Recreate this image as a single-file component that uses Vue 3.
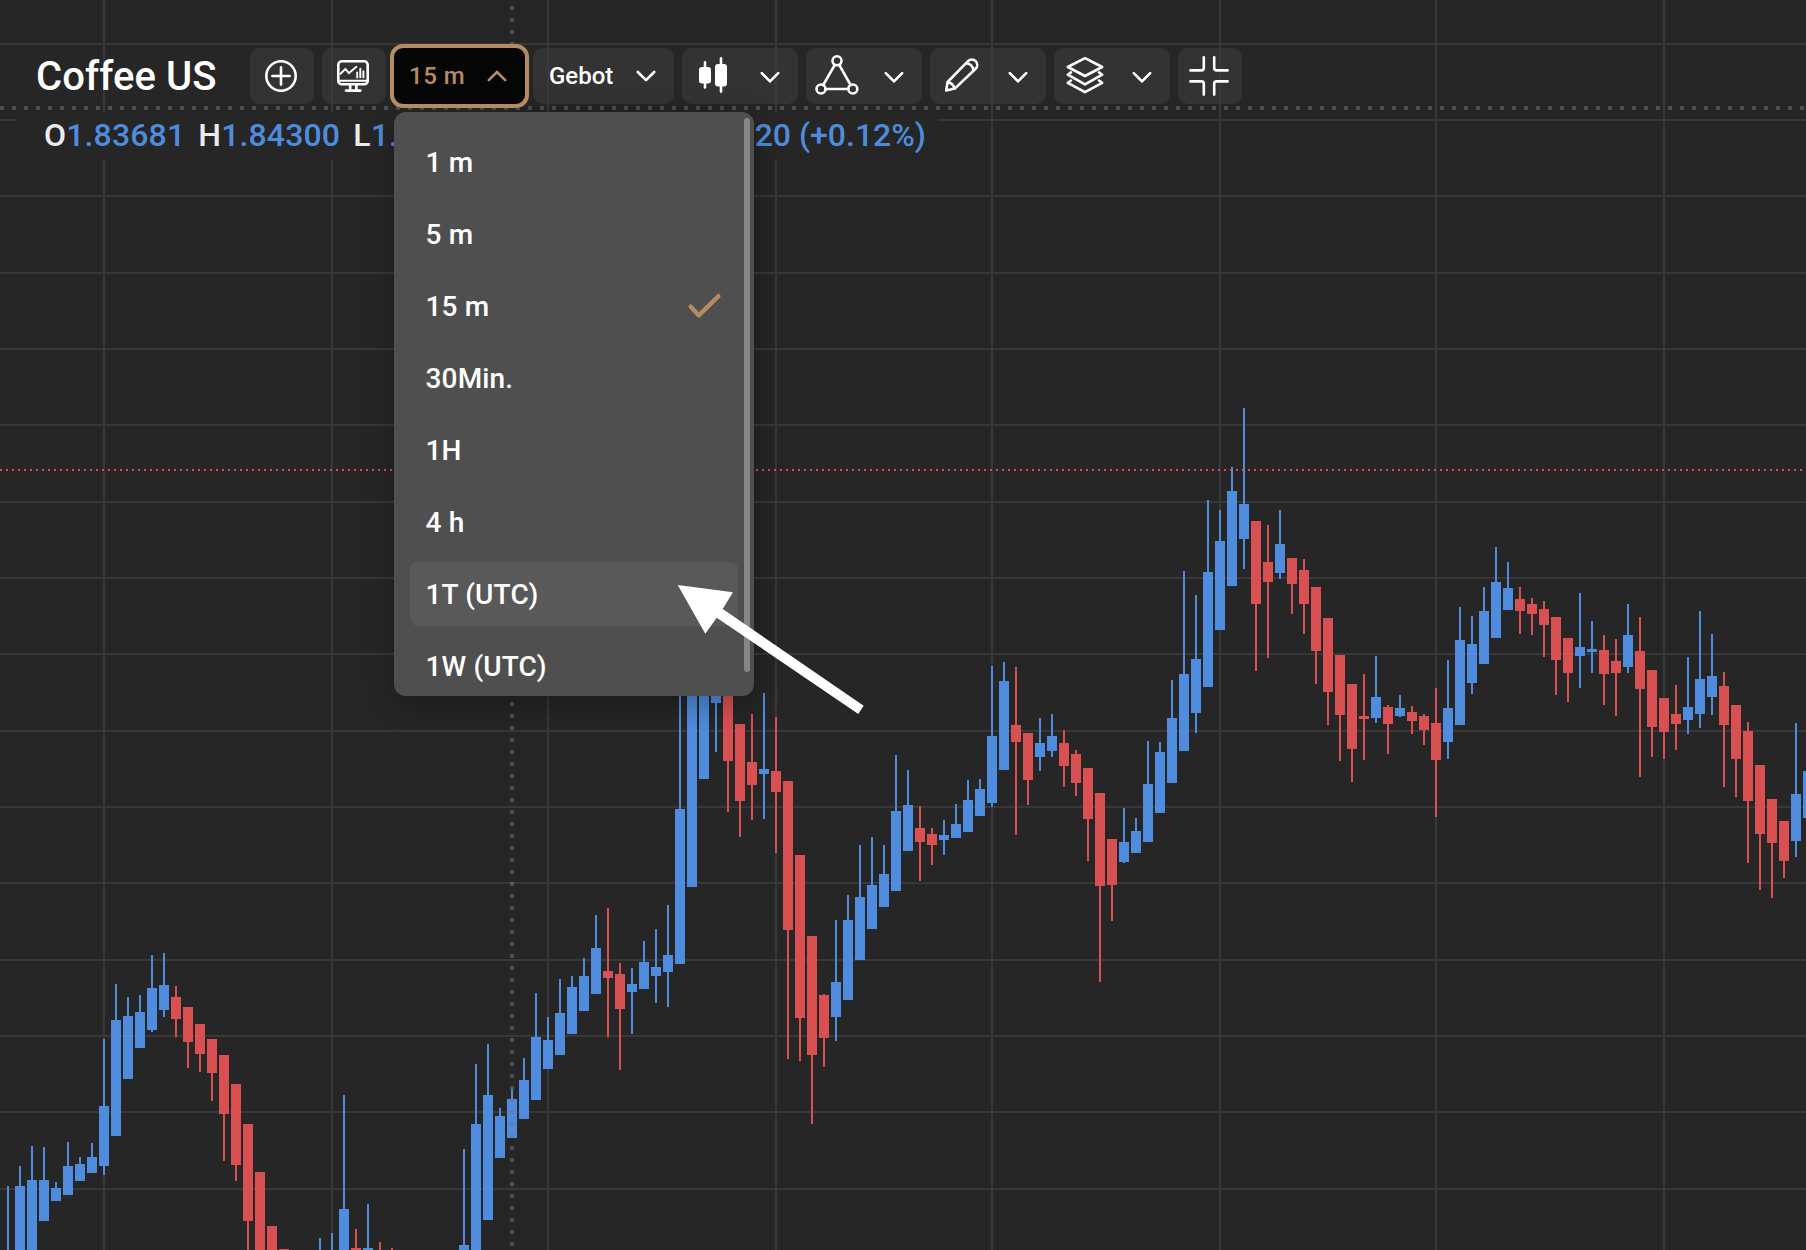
<script setup>
import { computed, ref } from 'vue';

const WIDTH = 1806;
const HEIGHT = 1250;
const STEP = 12;
const FIRST_X = 8;

const menuOpen = ref(true);
const selected = ref('15 m');
const hovered = ref('1T (UTC)');

const timeframes = ['1 m', '5 m', '15 m', '30Min.', '1H', '4 h', '1T (UTC)', '1W (UTC)'];

const gridX = [104, 332, 548, 776, 992, 1220, 1436, 1664];
const gridY = [44, 120, 196, 273, 349, 425, 502, 578, 654, 731, 807, 883, 960, 1036, 1112, 1189];

// [slot, direction, high, body top, body bottom, low]
const series = [
  [0, 'u', 1186, 1260, 1270, 1270],
  [1, 'u', 1166, 1186, 1260, 1260],
  [2, 'u', 1146, 1180, 1260, 1260],
  [3, 'u', 1147, 1180, 1221, 1221],
  [4, 'u', 1182, 1188, 1201, 1201],
  [5, 'u', 1142, 1166, 1195, 1195],
  [6, 'u', 1157, 1164, 1181, 1181],
  [7, 'u', 1143, 1157, 1173, 1173],
  [8, 'u', 1039, 1106, 1166, 1175],
  [9, 'u', 984, 1020, 1136, 1136],
  [10, 'u', 997, 1016, 1079, 1079],
  [11, 'u', 995, 1012, 1048, 1048],
  [12, 'u', 955, 988, 1030, 1032],
  [13, 'u', 953, 985, 1010, 1017],
  [14, 'd', 986, 997, 1019, 1037],
  [15, 'd', 1007, 1007, 1042, 1068],
  [16, 'd', 1024, 1024, 1054, 1072],
  [17, 'd', 1039, 1039, 1073, 1101],
  [18, 'd', 1055, 1055, 1114, 1161],
  [19, 'd', 1084, 1084, 1165, 1181],
  [20, 'd', 1124, 1124, 1221, 1260],
  [21, 'd', 1172, 1172, 1260, 1260],
  [22, 'd', 1226, 1226, 1260, 1260],
  [23, 'd', 1249, 1249, 1260, 1260],
  [26, 'u', 1238, 1260, 1270, 1270],
  [27, 'u', 1233, 1260, 1270, 1270],
  [28, 'u', 1095, 1209, 1260, 1260],
  [29, 'd', 1229, 1248, 1260, 1260],
  [30, 'u', 1204, 1248, 1260, 1260],
  [31, 'd', 1242, 1260, 1270, 1270],
  [32, 'd', 1248, 1260, 1270, 1270],
  [38, 'u', 1149, 1245, 1260, 1260],
  [39, 'u', 1064, 1124, 1260, 1260],
  [40, 'u', 1044, 1095, 1220, 1220],
  [41, 'u', 1108, 1116, 1158, 1158],
  [42, 'u', 1089, 1099, 1138, 1138],
  [43, 'u', 1058, 1080, 1119, 1119],
  [44, 'u', 993, 1037, 1100, 1100],
  [45, 'u', 1017, 1040, 1069, 1069],
  [46, 'u', 979, 1013, 1055, 1055],
  [47, 'u', 976, 987, 1034, 1034],
  [48, 'u', 958, 976, 1011, 1011],
  [49, 'u', 915, 948, 994, 994],
  [50, 'd', 908, 971, 978, 1037],
  [51, 'd', 963, 974, 1009, 1070],
  [52, 'u', 968, 984, 992, 1034],
  [53, 'u', 941, 962, 989, 989],
  [54, 'u', 929, 967, 976, 1003],
  [55, 'u', 905, 955, 972, 1007],
  [56, 'u', 640, 809, 964, 964],
  [57, 'u', 620, 660, 887, 887],
  [58, 'u', 610, 640, 779, 779],
  [59, 'u', 600, 640, 703, 752],
  [60, 'd', 600, 660, 761, 812],
  [61, 'd', 724, 724, 801, 837],
  [62, 'd', 714, 762, 785, 820],
  [63, 'u', 693, 769, 774, 819],
  [64, 'd', 717, 771, 792, 853],
  [65, 'd', 781, 781, 930, 1059],
  [66, 'd', 855, 855, 1018, 1061],
  [67, 'd', 936, 936, 1055, 1124],
  [68, 'd', 994, 995, 1038, 1067],
  [69, 'u', 920, 982, 1017, 1041],
  [70, 'u', 895, 920, 1000, 1000],
  [71, 'u', 845, 897, 960, 960],
  [72, 'u', 837, 885, 929, 929],
  [73, 'u', 845, 874, 907, 907],
  [74, 'u', 755, 811, 891, 891],
  [75, 'u', 770, 805, 851, 851],
  [76, 'd', 806, 828, 842, 881],
  [77, 'd', 828, 834, 845, 865],
  [78, 'u', 820, 835, 840, 855],
  [79, 'u', 804, 824, 838, 838],
  [80, 'u', 780, 800, 832, 832],
  [81, 'u', 779, 789, 816, 816],
  [82, 'u', 666, 736, 803, 807],
  [83, 'u', 662, 681, 770, 770],
  [84, 'd', 667, 725, 742, 835],
  [85, 'd', 733, 733, 780, 805],
  [86, 'u', 718, 743, 757, 771],
  [87, 'u', 714, 736, 751, 757],
  [88, 'd', 730, 743, 766, 787],
  [89, 'd', 750, 754, 783, 796],
  [90, 'd', 768, 768, 819, 861],
  [91, 'd', 793, 793, 886, 982],
  [92, 'd', 839, 839, 885, 921],
  [93, 'u', 808, 842, 862, 863],
  [94, 'u', 818, 831, 853, 853],
  [95, 'u', 741, 784, 842, 842],
  [96, 'u', 742, 752, 813, 813],
  [97, 'u', 680, 718, 783, 783],
  [98, 'u', 571, 674, 751, 751],
  [99, 'u', 595, 659, 713, 733],
  [100, 'u', 500, 572, 687, 687],
  [101, 'u', 510, 541, 630, 630],
  [102, 'u', 467, 491, 586, 586],
  [103, 'u', 408, 504, 539, 569],
  [104, 'd', 521, 521, 604, 671],
  [105, 'd', 525, 562, 582, 658],
  [106, 'u', 510, 544, 573, 579],
  [107, 'd', 558, 558, 584, 614],
  [108, 'd', 559, 570, 604, 634],
  [109, 'd', 587, 587, 651, 684],
  [110, 'd', 618, 618, 692, 725],
  [111, 'd', 655, 655, 715, 761],
  [112, 'd', 684, 684, 749, 782],
  [113, 'd', 674, 716, 719, 760],
  [114, 'u', 656, 697, 718, 723],
  [115, 'd', 705, 707, 724, 754],
  [116, 'u', 695, 708, 716, 717],
  [117, 'd', 706, 712, 721, 734],
  [118, 'd', 714, 716, 730, 745],
  [119, 'd', 688, 723, 760, 817],
  [120, 'u', 660, 708, 742, 759],
  [121, 'u', 607, 640, 725, 725],
  [122, 'u', 616, 644, 683, 694],
  [123, 'u', 587, 611, 664, 664],
  [124, 'u', 547, 582, 638, 638],
  [125, 'u', 562, 588, 610, 610],
  [126, 'd', 587, 599, 611, 634],
  [127, 'd', 598, 604, 614, 635],
  [128, 'd', 601, 609, 625, 657],
  [129, 'd', 617, 617, 660, 695],
  [130, 'd', 638, 638, 673, 702],
  [131, 'u', 593, 647, 656, 688],
  [132, 'u', 621, 649, 652, 673],
  [133, 'd', 635, 650, 674, 705],
  [134, 'd', 639, 661, 673, 716],
  [135, 'u', 604, 635, 667, 673],
  [136, 'd', 617, 651, 689, 777],
  [137, 'd', 670, 670, 727, 757],
  [138, 'd', 698, 698, 732, 759],
  [139, 'd', 685, 714, 724, 750],
  [140, 'u', 657, 707, 720, 734],
  [141, 'u', 611, 679, 714, 728],
  [142, 'u', 634, 676, 697, 715],
  [143, 'd', 672, 686, 725, 787],
  [144, 'd', 705, 705, 759, 797],
  [145, 'd', 722, 731, 801, 863],
  [146, 'd', 765, 765, 834, 890],
  [147, 'd', 799, 799, 843, 898],
  [148, 'd', 821, 821, 861, 878],
  [149, 'u', 723, 794, 841, 857],
  [150, 'u', 771, 771, 818, 818]
];

const candles = computed(() =>
  series.map(([slot, dir, high, top, bottom, low]) => ({
    slot,
    dir,
    x: FIRST_X + slot * STEP,
    high,
    top,
    bottom,
    low
  }))
);

const pick = (value) => {
  selected.value = value;
  menuOpen.value = false;
};
</script>

<template>
  <div class="terminal">
    <svg class="chart" :width="WIDTH" :height="HEIGHT" :viewBox="`0 0 ${WIDTH} ${HEIGHT}`" shape-rendering="crispEdges">
      <g class="chart__grid">
        <rect v-for="x in gridX" :key="`x${x}`" :x="x - 1" y="0" width="2" :height="HEIGHT" />
        <rect v-for="y in gridY" :key="`y${y}`" x="0" :y="y - 1" :width="WIDTH" height="2" />
      </g>
      <g v-for="c in candles" :key="c.slot" :class="c.dir === 'u' ? 'candle--up' : 'candle--down'">
        <rect :x="c.x - 1" :y="c.high" width="2" :height="c.low - c.high" />
        <rect :x="c.x - 5" :y="c.top" width="10" :height="c.bottom - c.top" />
      </g>
      <line class="chart__price" x1="0" y1="470" :x2="WIDTH" y2="470" />
      <line class="chart__cross" x1="512" y1="-6" x2="512" :y2="HEIGHT" />
      <line class="chart__cross" x1="0" y1="108" :x2="WIDTH" y2="108" />
    </svg>

    <header class="toolbar">
      <h1 class="toolbar__title">Coffee US</h1>

      <button class="tool">
        <svg class="icon" width="64" height="56" viewBox="0 0 64 56">
          <circle cx="31" cy="28" r="14.7" />
          <path d="M31 19.4v17.2M22.4 28h17.2" />
        </svg>
      </button>

      <button class="tool">
        <svg class="icon" width="64" height="56" viewBox="0 0 64 56">
          <rect x="16.3" y="13.3" width="29.4" height="23" rx="3.6" />
          <path class="icon__thin" d="M17 32.8h28" />
          <path class="icon__thin" d="M18.4 25.8l5-5 3.4 4.4 7.6-6.4" />
          <path class="icon__thin" d="M35.2 24.4v5M38.3 20.8v8.6M41.4 23.2v6.2" />
          <path d="M28.2 37.4v4M34.4 37.4v4" />
          <path d="M24 42.6h14.4" />
        </svg>
      </button>

      <div class="dropdown">
        <button class="tool tool--active" @click="menuOpen = !menuOpen">
          <span class="tool__label">{{ selected }}</span>
          <svg class="icon" width="20" height="14" viewBox="0 0 20 14">
            <path d="M1.8 11.2L10 3l8.2 8.2" />
          </svg>
        </button>

        <div v-if="menuOpen" class="menu">
          <ul class="menu__list">
            <li
              v-for="item in timeframes"
              :key="item"
              class="menu__item"
              :class="{ 'menu__item--hover': item === hovered }"
              @mouseenter="hovered = item"
              @click="pick(item)"
            >
              <span>{{ item }}</span>
              <svg v-if="item === selected" class="menu__check" width="36" height="28" viewBox="0 0 36 28">
                <path d="M4.6 14.6L12.8 23.4 32.4 4.2" />
              </svg>
            </li>
          </ul>
          <div class="menu__thumb"></div>
        </div>
      </div>

      <button class="tool tool--text">
        <span class="tool__label">Gebot</span>
        <svg class="icon" width="20" height="14" viewBox="0 0 20 14">
          <path d="M1.8 3L10 11.2 18.2 3" />
        </svg>
      </button>

      <button class="tool">
        <svg class="icon" width="116" height="56" viewBox="0 0 116 56">
          <path d="M23 14.4v25M39 10.4v33.2" />
          <rect class="icon__solid" x="17" y="19" width="12" height="16.4" rx="3" />
          <rect class="icon__solid" x="33" y="16" width="12" height="22.4" rx="3" />
          <path d="M79.8 25.2L88 33.4 96.2 25.2" />
        </svg>
      </button>

      <button class="tool">
        <svg class="icon" width="116" height="56" viewBox="0 0 116 56">
          <circle cx="31" cy="12.8" r="4.5" />
          <circle cx="15" cy="41" r="4.5" />
          <circle cx="46.8" cy="41" r="4.5" />
          <path d="M28.8 16.8L17.2 37M33.2 16.8L44.6 37M19.6 41h22.6" />
          <path d="M79.8 25.2L88 33.4 96.2 25.2" />
        </svg>
      </button>

      <button class="tool">
        <svg class="icon" width="116" height="56" viewBox="0 0 116 56">
          <path d="M16.2 42.4l1.4-8.4L38 13.2a5.3 5.3 0 0 1 7.6 7.6L24.8 40.6z" />
          <path d="M36.4 15.2c4 .4 6.4 3 7 7M18 34.4c3.6.6 5.6 2.6 6.4 6" />
          <path d="M79.8 25.2L88 33.4 96.2 25.2" />
        </svg>
      </button>

      <button class="tool">
        <svg class="icon" width="116" height="56" viewBox="0 0 116 56">
          <path d="M31 10.2L48.2 19 31 28 13.8 19z" />
          <path d="M17 24.4l-3.2 2.3L31 36.4l17.2-9.7-3.2-2.3" />
          <path d="M17 32.5l-3.2 2.3L31 44.2l17.2-9.4-3.2-2.3" />
          <path d="M79.8 25.2L88 33.4 96.2 25.2" />
        </svg>
      </button>

      <button class="tool">
        <svg class="icon" width="64" height="56" viewBox="0 0 64 56">
          <path d="M12.4 22.4h11q2.4 0 2.4-2.4V9.2" />
          <path d="M49.6 22.4h-11q-2.4 0-2.4-2.4V9.2" />
          <path d="M12.4 33.4h11q2.4 0 2.4 2.4v10.8" />
          <path d="M49.6 33.4h-11q-2.4 0-2.4 2.4v10.8" />
        </svg>
      </button>
    </header>

    <div class="legend">
      <span class="legend__cell">O<b>1.83681</b></span>
      <span class="legend__cell">H<b>1.84300</b></span>
      <span class="legend__cell">L<b>1.83520</b></span>
      <span class="legend__change">+0.00220 (+0.12%)</span>
    </div>

    <svg class="pointer" width="190" height="134" viewBox="676 583 190 134">
      <path d="M677.7 585l55.3 7.3-10.3 16.7 141 96.7-5.4 8.3-141.6-96.3-11.4 16z" />
    </svg>
  </div>
</template>

<style>
body {
  margin: 0;
  background: #262626;
}
</style>

<style scoped>
.terminal {
  position: relative;
  width: 1806px;
  height: 1250px;
  overflow: hidden;
  background: #262626;
  color: #fff;
  font-family: Roboto, 'Liberation Sans', sans-serif;
}

.chart {
  position: absolute;
  inset: 0;
  display: block;
}

.chart__grid {
  fill: #383838;
}

.candle--up {
  fill: #4f8cdd;
}

.candle--down {
  fill: #d95053;
}

.chart__price {
  stroke: #d95053;
  stroke-width: 2;
  stroke-dasharray: 2 4;
}

.chart__cross {
  stroke: rgba(112, 117, 133, 0.5);
  stroke-width: 4;
  stroke-dasharray: 4 8;
}

.toolbar {
  position: relative;
  z-index: 2;
  display: flex;
  gap: 8px;
  height: 56px;
  padding: 48px 0 0 36px;
}

.toolbar__title {
  width: 206px;
  margin: 0;
  font-size: 40px;
  font-weight: 500;
  letter-spacing: 0.1px;
  line-height: 58px;
  white-space: nowrap;
}

.tool {
  display: flex;
  align-items: center;
  flex: none;
  height: 56px;
  padding: 0;
  border: 0;
  border-radius: 10px;
  background: rgba(61, 61, 61, 0.58);
  color: #fff;
  font-family: inherit;
  cursor: pointer;
}

.tool__label {
  font-size: 24px;
  font-weight: 500;
  line-height: 56px;
  white-space: nowrap;
}

.tool--text {
  justify-content: space-between;
  width: 141px;
  padding: 0 18px 0 16px;
}

.tool--active {
  justify-content: space-between;
  box-sizing: border-box;
  width: 139px;
  height: 64px;
  margin: -4px;
  padding: 0 18px 0 15px;
  border: 4px solid #b58b63;
  border-radius: 13px;
  background: rgba(4, 4, 4, 0.94);
  color: #b58b63;
}

.tool--active .tool__label {
  letter-spacing: 0.5px;
}

.icon {
  display: block;
  fill: none;
  stroke: currentColor;
  stroke-width: 2.6;
  stroke-linecap: round;
  stroke-linejoin: round;
}

.icon__thin {
  stroke-width: 1.9;
}

.icon__solid {
  fill: currentColor;
  stroke: none;
}

.dropdown {
  position: relative;
  width: 131px;
}

.menu {
  position: absolute;
  top: 64px;
  left: 0;
  box-sizing: border-box;
  width: 360px;
  height: 584px;
  padding: 18px 16px 0;
  overflow: hidden;
  border-radius: 12px;
  background: #4f4f4f;
}

.dropdown::after {
  content: '';
  position: absolute;
  z-index: -1;
  top: 64px;
  left: 0;
  width: 360px;
  height: 584px;
  border-radius: 12px;
  box-shadow: 0 8px 32px rgba(0, 0, 0, 0.3);
}

.menu__list {
  display: flex;
  flex-direction: column;
  gap: 8px;
  margin: 0;
  padding: 0;
  list-style: none;
}

.menu__item {
  display: flex;
  align-items: center;
  justify-content: space-between;
  height: 64px;
  padding: 0 16px 0 15.5px;
  border-radius: 8px;
  font-size: 28px;
  font-weight: 500;
  letter-spacing: 0.15px;
}

.menu__item--hover {
  background: #595959;
}

.menu__check {
  fill: none;
  stroke: #b58b63;
  stroke-width: 4.4;
  stroke-linecap: round;
  stroke-linejoin: round;
}

.menu__thumb {
  position: absolute;
  top: 6px;
  right: 4px;
  width: 6px;
  height: 554px;
  border-radius: 3px;
  background: #868686;
}

.legend {
  position: relative;
  z-index: 1;
  display: flex;
  gap: 13px;
  box-sizing: border-box;
  width: 922px;
  height: 48px;
  margin: 8px 0 0 16px;
  padding: 0 12px 0 28px;
  background: rgba(38, 38, 38, 0.95);
  font-size: 32px;
  font-weight: 500;
  line-height: 46px;
  white-space: nowrap;
}

.legend__cell b,
.legend__change {
  color: #4f8cdd;
  font-weight: 500;
}

.legend__cell {
  color: #ececf0;
  letter-spacing: 0.15px;
}

.legend__change {
  margin-left: auto;
}

.pointer {
  position: absolute;
  z-index: 3;
  top: 583px;
  left: 676px;
  fill: #fff;
}
</style>
